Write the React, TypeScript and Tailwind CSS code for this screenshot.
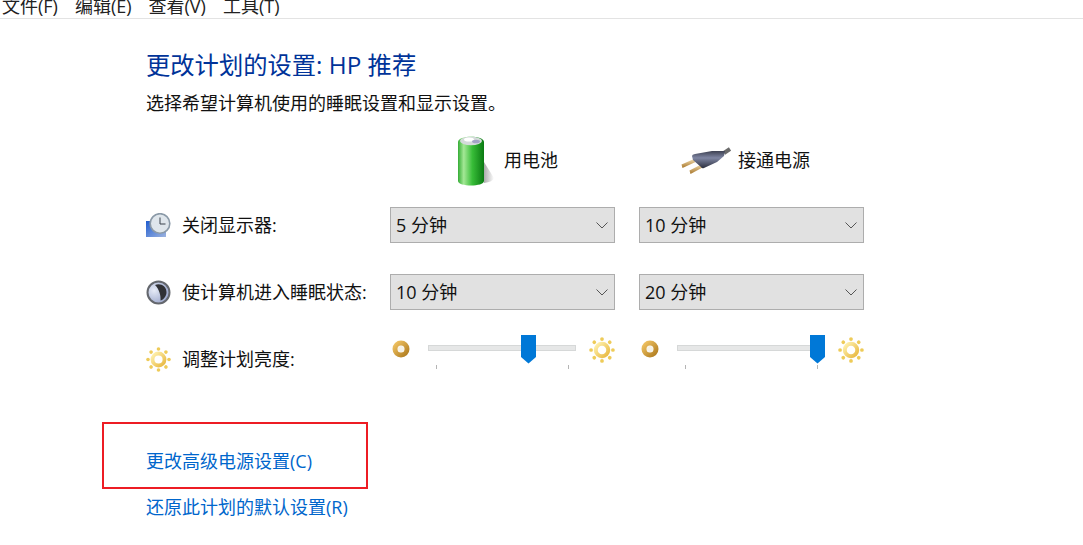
import React from "react";

const font = "font-['Open_Sans','Noto_Sans_CJK_SC',sans-serif]";

function Battery() {
  return (
    <svg width="38" height="50" viewBox="0 0 38 50" className="block">
      <defs>
        <linearGradient id="bat" x1="0" x2="1" y1="0" y2="0">
          <stop offset="0" stopColor="#35ad35" />
          <stop offset="0.22" stopColor="#a4e896" />
          <stop offset="0.55" stopColor="#38bd38" />
          <stop offset="1" stopColor="#0a7a12" />
        </linearGradient>
        <linearGradient id="shade" x1="0" x2="1" y1="0" y2="0">
          <stop offset="0" stopColor="#8f8f8f" />
          <stop offset="1" stopColor="#ffffff" />
        </linearGradient>
      </defs>
      <path d="M27 26 L37 42 Q36 46 27 47 Z" fill="url(#shade)" opacity="0.75" />
      <path d="M1 6 C1 -1 27 -1 27 6 V45 C27 51 1 51 1 45 Z" fill="url(#bat)" />
      <ellipse cx="14" cy="5" rx="11" ry="4.2" fill="#d4dada" />
      <ellipse cx="12" cy="3.5" rx="5" ry="2" fill="#ffffff" />
      <ellipse cx="19" cy="5.5" rx="4" ry="1.8" fill="#a3a3c6" />
    </svg>
  );
}

function Plug() {
  return (
    <svg width="50" height="28" viewBox="0 0 50 28" className="block">
      <defs>
        <linearGradient id="plg" x1="0" x2="0" y1="0" y2="1">
          <stop offset="0" stopColor="#3d4152" />
          <stop offset="0.4" stopColor="#7f86a3" />
          <stop offset="1" stopColor="#2b2e3c" />
        </linearGradient>
        <linearGradient id="pin" x1="0" x2="0" y1="0" y2="1">
          <stop offset="0" stopColor="#f2dcae" />
          <stop offset="1" stopColor="#a8772c" />
        </linearGradient>
      </defs>
      <path d="M43 6 L49 2" stroke="#6b6b6b" strokeWidth="4" fill="none" />
      <path d="M0.5 17.5 L13 12 L14.5 15 L1.5 21 Z" fill="url(#pin)" />
      <path d="M8.5 23.5 L21 17 L22.5 20 L9.5 27 Z" fill="url(#pin)" />
      <path d="M11 9 Q11 7.5 14 7 L31 4 L44 4 L43 9 L36 15 L23 21 Q21 22 20 20 L12 13 Z" fill="url(#plg)" />
    </svg>
  );
}

function Monitor() {
  return (
    <svg width="25" height="25" viewBox="0 0 25 25" className="block">
      <defs>
        <linearGradient id="mon" x1="0" x2="1" y1="0" y2="1">
          <stop offset="0" stopColor="#1f5ccf" />
          <stop offset="1" stopColor="#9db4e0" />
        </linearGradient>
      </defs>
      <rect x="0" y="8" width="20" height="16" fill="url(#mon)" />
      <circle cx="14" cy="10.5" r="9.8" fill="#dfe6ec" stroke="#8b9aa8" strokeWidth="1.6" />
      <path d="M14 4.5 V11 H19.5" stroke="#3a434d" strokeWidth="1" fill="none" />
    </svg>
  );
}

function Moon() {
  return (
    <svg width="25" height="25" viewBox="0 0 25 25" className="block">
      <defs>
        <radialGradient id="mn" cx="0.3" cy="0.4" r="0.8">
          <stop offset="0" stopColor="#e6ebf7" />
          <stop offset="1" stopColor="#8f9cc4" />
        </radialGradient>
      </defs>
      <circle cx="12.5" cy="12.5" r="11" fill="url(#mn)" stroke="#64676d" strokeWidth="2" />
      <path d="M9 5 C14 2.5 21 6 20.5 13 C20 17 17 20 14.5 20.5 C15 15 13 9 9 5 Z" fill="#303135" />
    </svg>
  );
}

function Sun({ size = 25 }: { size?: number }) {
  const rays = [0, 45, 90, 135, 180, 225, 270, 315];
  return (
    <svg width={size} height={size} viewBox="0 0 25 25" className="block">
      <defs>
        <linearGradient id="sn" x1="0" x2="1" y1="0" y2="1">
          <stop offset="0" stopColor="#fff2b0" />
          <stop offset="1" stopColor="#e8b840" />
        </linearGradient>
      </defs>
      {rays.map((r) => (
        <circle key={r} cx="12.5" cy="2" r="1.8" fill="#eecb58" transform={`rotate(${r} 12.5 12.5)`} />
      ))}
      <circle cx="12.5" cy="12.5" r="6" fill="#ffffff" stroke="url(#sn)" strokeWidth="3.8" />
    </svg>
  );
}

function Dim() {
  return (
    <svg width="18" height="18" viewBox="0 0 18 18" className="block">
      <defs>
        <linearGradient id="dm" x1="0" x2="1" y1="0" y2="1">
          <stop offset="0" stopColor="#efc161" />
          <stop offset="1" stopColor="#b27f22" />
        </linearGradient>
      </defs>
      <circle cx="9" cy="9" r="6" fill="none" stroke="url(#dm)" strokeWidth="5" />
      <circle cx="9" cy="9" r="3" fill="#f6f2e6" />
    </svg>
  );
}

function Select({ value }: { value: string }) {
  return (
    <div className="flex h-9 w-[225px] items-center justify-between border border-[#adadad] bg-[#e1e1e1] pl-[5px] pr-[6px] text-[18px] text-[#111]">
      <span>{value}</span>
      <svg width="12" height="7" viewBox="0 0 12 7" className="block">
        <path d="M0.5 0.5 L6 6 L11.5 0.5" fill="none" stroke="#555" strokeWidth="1" />
      </svg>
    </div>
  );
}

function Slider({ thumb }: { thumb: number }) {
  return (
    <div className="flex w-[225px] items-start">
      <div className="ml-[2px] mt-[5px]"><Dim /></div>
      <div className="relative ml-[18px] h-[30px] w-[149px]">
        <div className="mt-[10px] h-[6px] w-full border border-[#d6d8d8] bg-[#e6e7e7]" />
        <div className="absolute left-[8px] top-[30px] h-[4px] w-px bg-[#b5b5b5]" />
        <div className="absolute left-[140px] top-[30px] h-[4px] w-px bg-[#b5b5b5]" />
        <svg width="15" height="29" viewBox="0 0 15 29" className="absolute top-0 block" style={{ left: thumb }}>
          <path d="M0 0 H15 V22 L7.5 28.5 L0 22 Z" fill="#0078d7" />
        </svg>
      </div>
      <div className="ml-[13px] mt-[2px]"><Sun size={26} /></div>
    </div>
  );
}

function Row({ icon, label, h, children, mt, right }: { icon: React.ReactNode; label: string; h: string; children: React.ReactNode; mt: string; right?: string }) {
  return (
    <div className={`flex items-center ${h} ${mt}`}>
      <div className="flex w-[244px] items-center">
        <div className="w-9">{icon}</div>
        <span className="text-[18px] leading-6 text-[#111]">{label}</span>
      </div>
      <div className={`flex gap-6 ${right ?? ""}`}>{children}</div>
    </div>
  );
}

export default function App() {
  return (
    <div className={`${font} h-[545px] w-[1083px] overflow-hidden bg-white`}>
      <div className="flex h-[19px] items-end gap-[17px] overflow-hidden border-b border-[#e3e3e3] pl-[2px] text-[18px] leading-[24px] text-[#222]">
        <span>文件(F)</span>
        <span>编辑(E)</span>
        <span>查看(V)</span>
        <span>工具(T)</span>
      </div>

      <div className="pl-[146px]">
        <h1 className="mt-[28px] text-[24.3px] leading-[36px] text-[#003399]">更改计划的设置: HP 推荐</h1>
        <p className="mt-[8px] text-[18px] leading-6 text-[#111]">选择希望计算机使用的睡眠设置和显示设置。</p>

        <div className="mt-[19px] flex h-[50px] pl-[311px]">
          <div className="flex w-[224px] items-center gap-[9px] pt-[3px]">
            <Battery />
            <span className="text-[18px] text-[#111]">用电池</span>
          </div>
          <div className="flex items-center gap-[7px] pt-[3px]">
            <Plug />
            <span className="text-[18px] text-[#111]">接通电源</span>
          </div>
        </div>
      </div>

      <div className="pl-[146px]">
        <Row mt="mt-[23px]" h="h-9" icon={<Monitor />} label="关闭显示器:">
          <Select value="5 分钟" />
          <Select value="10 分钟" />
        </Row>
        <Row mt="mt-[31px]" h="h-9" icon={<Moon />} label="使计算机进入睡眠状态:">
          <Select value="10 分钟" />
          <Select value="20 分钟" />
        </Row>
        <Row mt="mt-[34px]" h="h-[30px]" right="-mt-[9px] self-start" icon={<Sun />} label="调整计划亮度:">
          <Slider thumb={93} />
          <Slider thumb={133} />
        </Row>
      </div>

      <div className="ml-[102px] mt-[48px] flex h-[67px] w-[266px] items-end border-2 border-[#ed1c24] pb-[14px] pl-[42px]">
        <a className="text-[18px] leading-6 text-[#0066cc]">更改高级电源设置(C)</a>
      </div>
      <div className="mt-[6px] pl-[146px]">
        <a className="text-[18px] leading-6 text-[#0066cc]">还原此计划的默认设置(R)</a>
      </div>
    </div>
  );
}
